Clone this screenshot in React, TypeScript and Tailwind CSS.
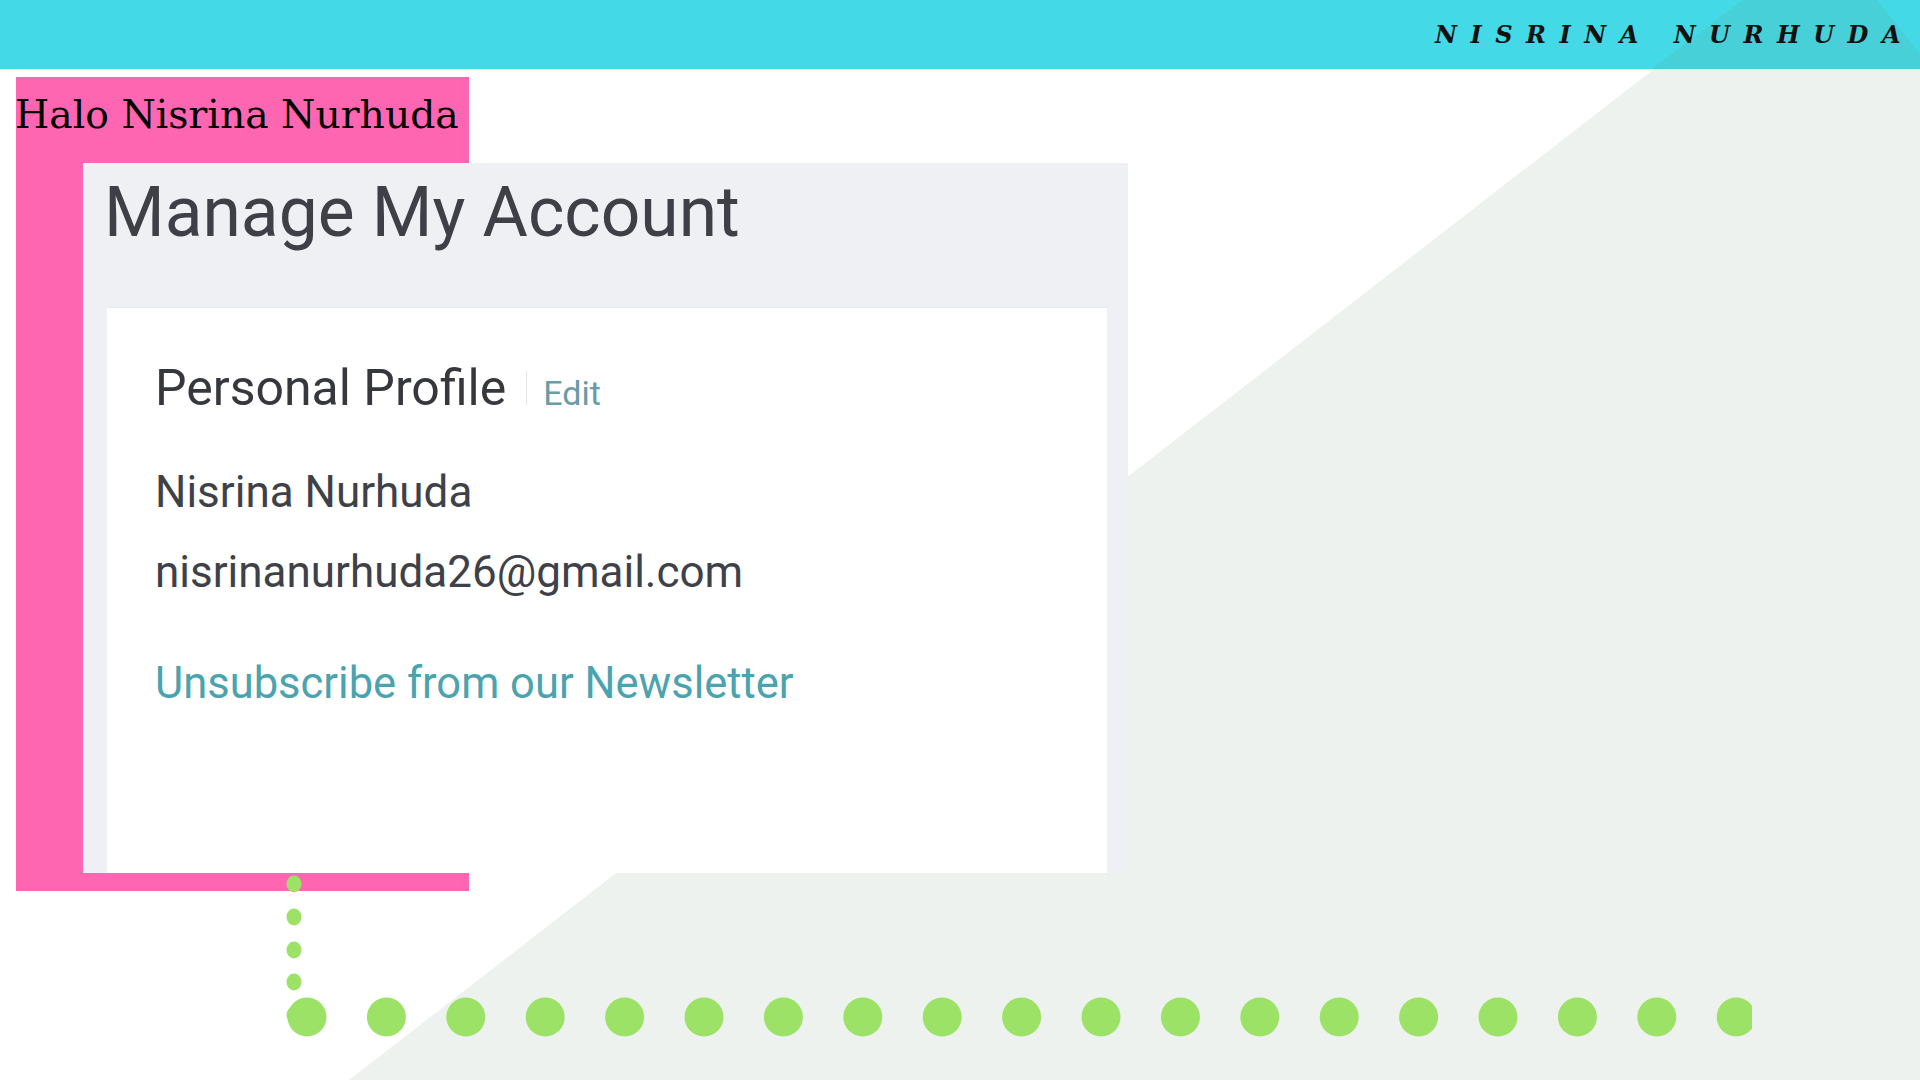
const bigDots = Array.from({ length: 19 }, (_, i) => 307 + i * 79.4);
const smallDots = [18, 51, 84, 116, 149];

function Header() {
  return (
    <header className="relative h-[69px] bg-[#44d9e6] flex items-center justify-end pr-[6px]">
      <svg className="absolute inset-0" width="1920" height="69" viewBox="0 0 1920 69">
        <polygon points="1743,0 1877,0 1920,54 1920,69 1652,69" fill="#47d0d8" />
      </svg>
      <span
        className="relative text-[24px] font-bold italic tracking-[13.5px] text-[#111]"
        style={{ fontFamily: '"DejaVu Serif", serif' }}
      >
        NISRINA NURHUDA
      </span>
    </header>
  );
}

function AccountCard() {
  return (
    <div className="ml-[67px] w-[1045px] h-[710px] shrink-0 bg-[#eef0f4] pt-[15px] flex flex-col">
      <h1 className="pl-[21px] text-[69.5px] leading-none text-[#3f4047]">Manage My Account</h1>
      <div className="mt-[59px] ml-[24px] mr-[21px] flex-1 bg-white border-t border-[#e7e9ee] pl-[48px] pt-[55px]">
        <div className="flex items-baseline">
          <h2 className="text-[50px] leading-none text-[#36383e]">Personal Profile</h2>
          <span className="ml-[20px] w-px h-[34px] bg-[#e2e4e8] self-center" />
          <a className="ml-[16px] text-[34px] leading-none text-[#6a9ba6]">Edit</a>
        </div>
        <p className="mt-[57px] text-[44px] leading-none text-[#3e4148]">Nisrina Nurhuda</p>
        <p className="mt-[36px] text-[44px] leading-none text-[#3e4148]">nisrinanurhuda26@gmail.com</p>
        <a className="block mt-[68px] text-[43.5px] leading-none text-[#4aa3ae]">
          Unsubscribe from our Newsletter
        </a>
      </div>
    </div>
  );
}

export default function App() {
  return (
    <div
      className="relative isolate w-[1920px] h-[1080px] overflow-hidden bg-white"
      style={{ fontFamily: 'Roboto, "Liberation Sans", sans-serif' }}
    >
      <svg className="absolute inset-0 -z-10" width="1920" height="1080" viewBox="0 0 1920 1080">
        <polygon points="1743,0 1920,0 1920,1080 349,1080" fill="#eef2ee" />
      </svg>

      <Header />

      <div className="mt-[8px] ml-[16px] w-[453px] h-[814px] bg-[#ff66b2] flex flex-col">
        <p
          className="h-[86px] shrink-0 pt-[18px] -ml-[1px] text-[39.3px] leading-none text-black whitespace-nowrap"
          style={{ fontFamily: '"DejaVu Serif", serif' }}
        >
          Halo Nisrina Nurhuda
        </p>
        <AccountCard />
      </div>

      <div className="relative -mt-[25px]">
        <svg width="1920" height="214" viewBox="0 0 1920 214">
          <defs>
            <clipPath id="dots-clip">
              <rect x="0" y="0" width="1752" height="214" />
            </clipPath>
          </defs>
          <g fill="#9be266" clipPath="url(#dots-clip)">
            {smallDots.map((cy) => (
              <ellipse key={cy} cx="294" cy={cy} rx="7.5" ry="8.5" />
            ))}
            {bigDots.map((cx) => (
              <circle key={cx} cx={cx} cy="151" r="19.5" />
            ))}
          </g>
        </svg>
      </div>
    </div>
  );
}
